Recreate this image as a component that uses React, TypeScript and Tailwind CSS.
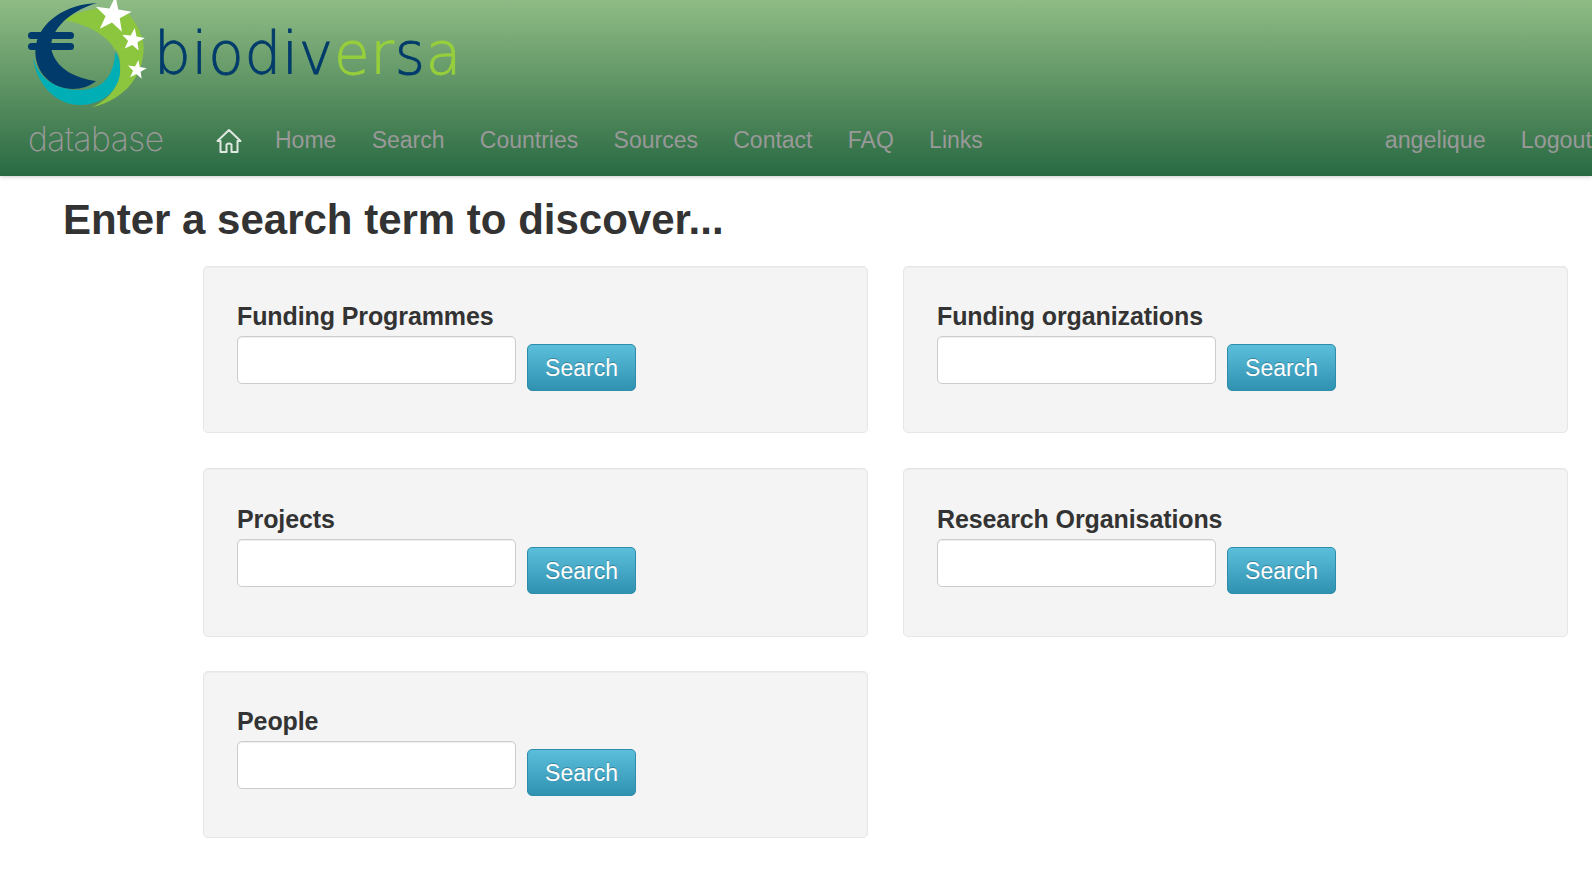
const sans = "font-['Liberation_Sans',Arial,sans-serif]";

function starPoints(cx: number, cy: number, R: number, r: number, rot: number) {
  const pts: string[] = [];
  for (let i = 0; i < 10; i++) {
    const a = ((rot + i * 36 - 90) * Math.PI) / 180;
    const d = i % 2 === 0 ? R : r;
    pts.push(`${(cx + d * Math.cos(a)).toFixed(1)},${(cy + d * Math.sin(a)).toFixed(1)}`);
  }
  return pts.join(" ");
}

function LogoMark() {
  return (
    <svg width="150" height="110" viewBox="0 0 150 110" className="shrink-0">
      <path d="M63 20 C80 10 105 4 128 13 C140 28 146 42 143 56 C140 82 118 102 92 107 C108 100 117 90 120 70 C121 58 118 50 115 50 C108 36 88 24 63 20Z" fill="#8cc63f" />
      <path d="M33 57 C36 84 56 105 80 105 C104 105 122 88 120 67 C120 60 118 55 115 52 C115 68 108 82 96 87 C80 93 60 90 47 80 C40 74 35 66 33 57Z" fill="#00afb5" />
      <path d="M97 3 C66 4 40 22 36 45 C32 68 48 88 72 89 C82 89 90 86 96 81 C76 78 58 70 52 52 C47 34 66 12 97 3Z" fill="#003b6b" />
      <rect x="28" y="32" width="46" height="7" rx="3.5" fill="#003b6b" />
      <rect x="28" y="43" width="46" height="7" rx="3.5" fill="#003b6b" />
      <polygon points={starPoints(113, 15, 19, 7.5, 8)} fill="#fff" />
      <polygon points={starPoints(133, 40, 12, 5, 8)} fill="#fff" />
      <polygon points={starPoints(137, 70, 10, 4, 8)} fill="#fff" />
    </svg>
  );
}

function HomeIcon() {
  return (
    <svg width="26" height="26" viewBox="0 0 26 26" fill="none" stroke="#dfe8e0" strokeWidth="2" strokeLinejoin="round" className="shrink-0">
      <path d="M1.5 13 L13 2 L24.5 13 L21.5 13 L21.5 24 L15.5 24 L15.5 16.5 Q13 14.5 10.5 16.5 L10.5 24 L4.5 24 L4.5 13 Z" />
    </svg>
  );
}

function SearchCard({ title, tall }: { title: string; tall?: boolean }) {
  return (
    <div className={`rounded-[5px] border border-[#e6e6e6] bg-[#f4f4f4] pl-[33px] shadow-[inset_0_1px_1px_rgba(0,0,0,0.03)] ${tall ? "h-[169px] pt-[35px]" : "h-[167px] pt-[34px]"}`}>
      <h3 className="text-[25px] leading-[30px] font-bold tracking-[-0.1px] text-[#333]">{title}</h3>
      <div className="flex items-start gap-[11px] pt-[5px]">
        <input type="text" className="h-[48px] w-[279px] rounded-[5px] border border-[#ccc] bg-white shadow-[inset_0_1px_1px_rgba(0,0,0,0.07)]" />
        <button className="mt-[8px] h-[47px] w-[109px] rounded-[5px] border border-[#2f8cab] bg-gradient-to-b from-[#5bbfdc] to-[#2f92b0] pt-[2px] text-[23px] leading-none text-white [text-shadow:0_-1px_0_rgba(0,0,0,0.25)]">
          Search
        </button>
      </div>
    </div>
  );
}

export default function App() {
  const links = ["Home", "Search", "Countries", "Sources", "Contact", "FAQ", "Links"];
  return (
    <div className={`h-[870px] w-[1592px] overflow-hidden bg-white ${sans}`}>
      <header className="flex h-[176px] flex-col bg-gradient-to-b from-[#8fbc85] to-[#286a43] shadow-[0_1px_4px_rgba(0,0,0,0.2)]">
        <div className="flex h-[113px] items-start">
          <LogoMark />
          <div className="mt-[14px] ml-[4px] font-['DejaVu_Sans',sans-serif] text-[58px] leading-[80px] font-extralight tracking-[0.7px] text-[#003b6b] [-webkit-text-stroke:0.8px]">
            biodiv<span className="text-[#97cf3c]">er</span>s<span className="text-[#97cf3c]">a</span>
          </div>
        </div>
        <nav className="flex flex-1 items-start whitespace-nowrap pt-[13px] text-[23px] leading-[28px] text-[#999]">
          <span className="-mt-[1px] ml-[28px] w-[188px] font-['Inter',sans-serif] text-[33.5px] leading-[28px] font-extralight tracking-[-0.5px]">database</span>
          <span className="mt-[2px]"><HomeIcon /></span>
          <div className="ml-[33px] flex gap-[35.3px]">
            {links.map((l) => (
              <span key={l}>{l}</span>
            ))}
          </div>
          <div className="ml-auto flex gap-[35px] text-[23.3px]">
            <span>angelique</span>
            <span>Logout</span>
          </div>
        </nav>
      </header>
      <main>
        <h1 className="pt-[19px] pb-[21px] pl-[63px] text-[42px] leading-[50px] font-bold text-[#333]">Enter a search term to discover...</h1>
        <div className="ml-[203px] grid w-[1365px] grid-cols-2 gap-x-[35px] gap-y-[34px]">
          <div className="mb-[1px]"><SearchCard title="Funding Programmes" /></div>
          <div className="mb-[1px]"><SearchCard title="Funding organizations" /></div>
          <SearchCard title="Projects" tall />
          <SearchCard title="Research Organisations" tall />
          <SearchCard title="People" />
        </div>
      </main>
    </div>
  );
}
